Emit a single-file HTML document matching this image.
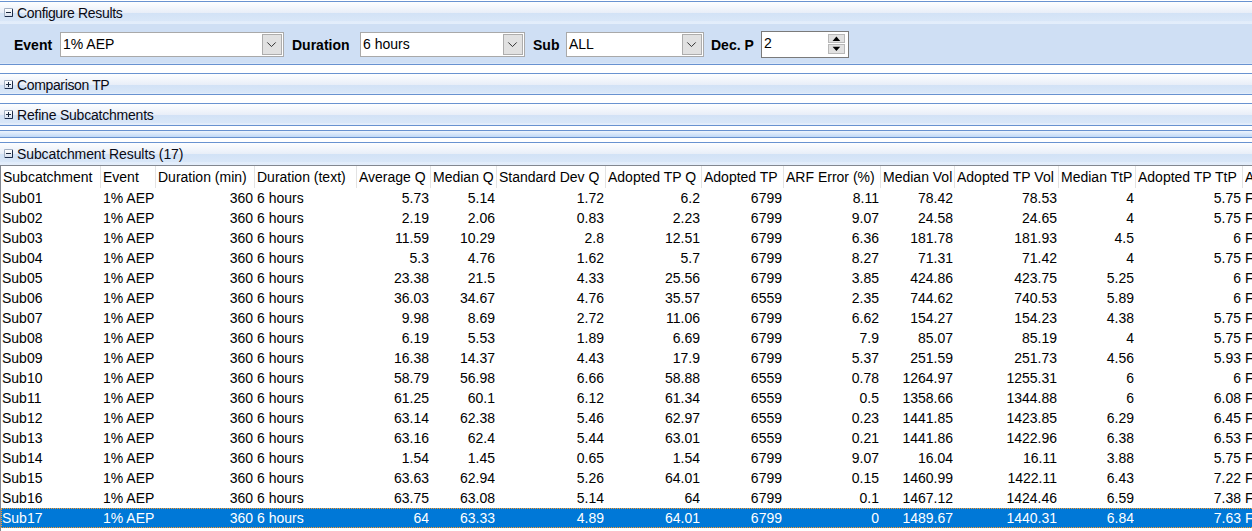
<!DOCTYPE html><html><head><meta charset="utf-8"><style>
*{margin:0;padding:0;box-sizing:border-box}
html,body{width:1252px;height:531px;overflow:hidden;background:#fff;font-family:"Liberation Sans",sans-serif;color:#000}
.a{position:absolute}
.ln{position:absolute;left:0;width:1252px;height:1px;background:#6892d0}
.band{position:absolute;left:0;width:1252px;background:linear-gradient(#fdfefe 0px,#e9eff8 11px,#d6e3f5 11px,#dae6f6 20px)}
.ttl{position:absolute;left:17px;font-size:14px;white-space:pre;color:#0a0a14;line-height:16px}
.ico{position:absolute;left:4px;width:9px;height:9px;border:1px solid #1d2d4a;border-top-color:#a0adc0;border-left-color:#a0adc0;border-radius:1.5px;background:linear-gradient(#ffffff,#eef2f9 50%,#d6dfee)}
.ico:before{content:"";position:absolute;left:1px;top:3px;width:5px;height:1px;background:#1b2a40}
.ico.p:after{content:"";position:absolute;left:3px;top:1px;width:1px;height:5px;background:#1b2a40}
.lbl{position:absolute;font-size:14px;font-weight:bold;white-space:pre;line-height:16px}
.cb{position:absolute;top:32px;height:25px;background:#fff;border:1px solid #a9a9a9}
.cb .t{position:absolute;left:2px;top:3px;font-size:14px;line-height:16px;white-space:pre}
.cb .btn{position:absolute;top:1px;right:1px;width:20px;height:21px;background:#e1e1e1;border:1px solid #adadad}
.cb .btn svg{position:absolute;left:0;top:0}
.hd{position:absolute;top:166px;height:22px;font-size:14px;line-height:16px;padding-top:3px;white-space:pre;overflow:hidden}
.sep{position:absolute;top:166px;width:1px;height:22px;background:#e3e3e3}
.c{position:absolute;height:20px;font-size:14px;line-height:16px;padding-top:2px;white-space:pre;overflow:hidden}
.r{text-align:right}
</style></head><body>
<div class="ln" style="top:1px"></div>
<div class="band" style="top:2px;height:22px;background:linear-gradient(#fdfeff 0px,#e8eef8 11px,#d2e2f6 11px,#d9e7f8 19px,#e1ecfa 19px,#e4eefb 22px)"></div>
<div class="ico" style="top:8px"></div>
<div class="ttl" style="top:5px;letter-spacing:-0.35px">Configure Results</div>
<div class="a" style="left:0;top:24px;width:1252px;height:40px;background:#cfdff4"></div>
<div class="a" style="left:0;top:63px;width:1252px;height:1px;background:#d9e6f8"></div>
<div class="ln" style="top:64px"></div>
<div class="lbl" style="left:14px;top:37px">Event</div>
<div class="cb" style="left:60px;width:224px"><div class="t">1% AEP</div><div class="btn"><svg width="19" height="19" viewBox="0 0 19 19"><path d="M4.3 7.4 L8.5 11.6 L12.7 7.4" fill="none" stroke="#333" stroke-width="1"/></svg></div></div>
<div class="lbl" style="left:292px;top:37px">Duration</div>
<div class="cb" style="left:360px;width:165px"><div class="t">6 hours</div><div class="btn"><svg width="19" height="19" viewBox="0 0 19 19"><path d="M4.3 7.4 L8.5 11.6 L12.7 7.4" fill="none" stroke="#333" stroke-width="1"/></svg></div></div>
<div class="lbl" style="left:533px;top:37px">Sub</div>
<div class="cb" style="left:566px;width:138px"><div class="t">ALL</div><div class="btn"><svg width="19" height="19" viewBox="0 0 19 19"><path d="M4.3 7.4 L8.5 11.6 L12.7 7.4" fill="none" stroke="#333" stroke-width="1"/></svg></div></div>
<div class="lbl" style="left:711px;top:37px">Dec. P</div>
<div class="a" style="left:761px;top:31px;width:88px;height:27px;background:#fff;border:1px solid #7a7a7a"><div class="a" style="left:2px;top:3px;font-size:14px;line-height:16px">2</div><div class="a" style="left:66px;top:2px;width:17px;height:9px;background:#e1e1e1;border:1px solid #b8b8b8"><svg class="a" style="left:0;top:0" width="15" height="7"><path d="M3.6 5.9 L7.4 1.6 L11.2 5.9 Z" fill="#000"/></svg></div><div class="a" style="left:66px;top:12px;width:17px;height:10px;background:#e1e1e1;border:1px solid #b8b8b8"><svg class="a" style="left:0;top:0" width="15" height="8"><path d="M3.6 1.8 L7.4 6.1 L11.2 1.8 Z" fill="#000"/></svg></div></div>
<div class="ln" style="top:73px"></div>
<div class="band" style="top:74px;height:20px;background:linear-gradient(#fdfeff 0px,#e8eef8 11px,#d2e2f6 11px,#d9e7f8 19px,#e1ecfa 19px,#e4eefb 20px)"></div>
<div class="ico p" style="top:80px"></div>
<div class="ttl" style="top:77px;letter-spacing:-0.36px">Comparison TP</div>
<div class="ln" style="top:94px"></div>
<div class="ln" style="top:103px"></div>
<div class="band" style="top:104px;height:21px;background:linear-gradient(#fdfeff 0px,#e8eef8 11px,#d2e2f6 11px,#d9e7f8 19px,#e1ecfa 19px,#e4eefb 21px)"></div>
<div class="ico p" style="top:110px"></div>
<div class="ttl" style="top:107px;letter-spacing:-0.21px">Refine Subcatchments</div>
<div class="ln" style="top:125px"></div>
<div class="ln" style="top:130px"></div>
<div class="a" style="left:0;top:131px;width:1252px;height:6px;background:linear-gradient(#edf4fd,#bfd8f6)"></div>
<div class="ln" style="top:137px"></div>
<div class="ln" style="top:142px"></div>
<div class="band" style="top:143px;height:22px;background:linear-gradient(#fdfeff 0px,#e8eef8 11px,#d2e2f6 11px,#d9e7f8 19px,#e1ecfa 19px,#e4eefb 22px)"></div>
<div class="ico" style="top:149px"></div>
<div class="ttl" style="top:146px;letter-spacing:-0.1px">Subcatchment Results (17)</div>
<div class="a" style="left:0;top:165px;width:1252px;height:1px;background:#828790"></div>
<div class="a" style="left:0;top:165px;width:1px;height:366px;background:#828790"></div>
<div class="hd" style="left:3px;width:97px">Subcatchment</div>
<div class="hd" style="left:103px;width:52px">Event</div>
<div class="hd" style="left:158px;width:96px">Duration (min)</div>
<div class="hd" style="left:257px;width:99px">Duration (text)</div>
<div class="hd" style="left:359px;width:71px">Average Q</div>
<div class="hd" style="left:433px;width:63px">Median Q</div>
<div class="hd" style="left:499px;width:106px">Standard Dev Q</div>
<div class="hd" style="left:608px;width:93px">Adopted TP Q</div>
<div class="hd" style="left:704px;width:79px">Adopted TP</div>
<div class="hd" style="left:786px;width:94px">ARF Error (%)</div>
<div class="hd" style="left:883px;width:71px">Median Vol</div>
<div class="hd" style="left:957px;width:101px">Adopted TP Vol</div>
<div class="hd" style="left:1061px;width:74px">Median TtP</div>
<div class="hd" style="left:1138px;width:104px">Adopted TP TtP</div>
<div class="hd" style="left:1245px;width:155px">A</div>
<div class="sep" style="left:100px"></div>
<div class="sep" style="left:155px"></div>
<div class="sep" style="left:254px"></div>
<div class="sep" style="left:356px"></div>
<div class="sep" style="left:430px"></div>
<div class="sep" style="left:496px"></div>
<div class="sep" style="left:605px"></div>
<div class="sep" style="left:701px"></div>
<div class="sep" style="left:783px"></div>
<div class="sep" style="left:880px"></div>
<div class="sep" style="left:954px"></div>
<div class="sep" style="left:1058px"></div>
<div class="sep" style="left:1135px"></div>
<div class="sep" style="left:1242px"></div>
<div class="a" style="left:1px;top:508px;width:1251px;height:20px;background:#0078d7"></div>
<div class="c" style="left:2px;width:97px;top:188px">Sub01</div>
<div class="c" style="left:103px;width:52px;top:188px">1% AEP</div>
<div class="c r" style="left:155px;width:98px;top:188px">360</div>
<div class="c" style="left:257px;width:99px;top:188px">6 hours</div>
<div class="c r" style="left:356px;width:73px;top:188px">5.73</div>
<div class="c r" style="left:430px;width:65px;top:188px">5.14</div>
<div class="c r" style="left:496px;width:108px;top:188px">1.72</div>
<div class="c r" style="left:605px;width:95px;top:188px">6.2</div>
<div class="c r" style="left:701px;width:81px;top:188px">6799</div>
<div class="c r" style="left:783px;width:96px;top:188px">8.11</div>
<div class="c r" style="left:880px;width:73px;top:188px">78.42</div>
<div class="c r" style="left:954px;width:103px;top:188px">78.53</div>
<div class="c r" style="left:1058px;width:76px;top:188px">4</div>
<div class="c r" style="left:1135px;width:106px;top:188px">5.75</div>
<div class="c" style="left:1245px;width:155px;top:188px">F</div>
<div class="c" style="left:2px;width:97px;top:208px">Sub02</div>
<div class="c" style="left:103px;width:52px;top:208px">1% AEP</div>
<div class="c r" style="left:155px;width:98px;top:208px">360</div>
<div class="c" style="left:257px;width:99px;top:208px">6 hours</div>
<div class="c r" style="left:356px;width:73px;top:208px">2.19</div>
<div class="c r" style="left:430px;width:65px;top:208px">2.06</div>
<div class="c r" style="left:496px;width:108px;top:208px">0.83</div>
<div class="c r" style="left:605px;width:95px;top:208px">2.23</div>
<div class="c r" style="left:701px;width:81px;top:208px">6799</div>
<div class="c r" style="left:783px;width:96px;top:208px">9.07</div>
<div class="c r" style="left:880px;width:73px;top:208px">24.58</div>
<div class="c r" style="left:954px;width:103px;top:208px">24.65</div>
<div class="c r" style="left:1058px;width:76px;top:208px">4</div>
<div class="c r" style="left:1135px;width:106px;top:208px">5.75</div>
<div class="c" style="left:1245px;width:155px;top:208px">F</div>
<div class="c" style="left:2px;width:97px;top:228px">Sub03</div>
<div class="c" style="left:103px;width:52px;top:228px">1% AEP</div>
<div class="c r" style="left:155px;width:98px;top:228px">360</div>
<div class="c" style="left:257px;width:99px;top:228px">6 hours</div>
<div class="c r" style="left:356px;width:73px;top:228px">11.59</div>
<div class="c r" style="left:430px;width:65px;top:228px">10.29</div>
<div class="c r" style="left:496px;width:108px;top:228px">2.8</div>
<div class="c r" style="left:605px;width:95px;top:228px">12.51</div>
<div class="c r" style="left:701px;width:81px;top:228px">6799</div>
<div class="c r" style="left:783px;width:96px;top:228px">6.36</div>
<div class="c r" style="left:880px;width:73px;top:228px">181.78</div>
<div class="c r" style="left:954px;width:103px;top:228px">181.93</div>
<div class="c r" style="left:1058px;width:76px;top:228px">4.5</div>
<div class="c r" style="left:1135px;width:106px;top:228px">6</div>
<div class="c" style="left:1245px;width:155px;top:228px">F</div>
<div class="c" style="left:2px;width:97px;top:248px">Sub04</div>
<div class="c" style="left:103px;width:52px;top:248px">1% AEP</div>
<div class="c r" style="left:155px;width:98px;top:248px">360</div>
<div class="c" style="left:257px;width:99px;top:248px">6 hours</div>
<div class="c r" style="left:356px;width:73px;top:248px">5.3</div>
<div class="c r" style="left:430px;width:65px;top:248px">4.76</div>
<div class="c r" style="left:496px;width:108px;top:248px">1.62</div>
<div class="c r" style="left:605px;width:95px;top:248px">5.7</div>
<div class="c r" style="left:701px;width:81px;top:248px">6799</div>
<div class="c r" style="left:783px;width:96px;top:248px">8.27</div>
<div class="c r" style="left:880px;width:73px;top:248px">71.31</div>
<div class="c r" style="left:954px;width:103px;top:248px">71.42</div>
<div class="c r" style="left:1058px;width:76px;top:248px">4</div>
<div class="c r" style="left:1135px;width:106px;top:248px">5.75</div>
<div class="c" style="left:1245px;width:155px;top:248px">F</div>
<div class="c" style="left:2px;width:97px;top:268px">Sub05</div>
<div class="c" style="left:103px;width:52px;top:268px">1% AEP</div>
<div class="c r" style="left:155px;width:98px;top:268px">360</div>
<div class="c" style="left:257px;width:99px;top:268px">6 hours</div>
<div class="c r" style="left:356px;width:73px;top:268px">23.38</div>
<div class="c r" style="left:430px;width:65px;top:268px">21.5</div>
<div class="c r" style="left:496px;width:108px;top:268px">4.33</div>
<div class="c r" style="left:605px;width:95px;top:268px">25.56</div>
<div class="c r" style="left:701px;width:81px;top:268px">6799</div>
<div class="c r" style="left:783px;width:96px;top:268px">3.85</div>
<div class="c r" style="left:880px;width:73px;top:268px">424.86</div>
<div class="c r" style="left:954px;width:103px;top:268px">423.75</div>
<div class="c r" style="left:1058px;width:76px;top:268px">5.25</div>
<div class="c r" style="left:1135px;width:106px;top:268px">6</div>
<div class="c" style="left:1245px;width:155px;top:268px">F</div>
<div class="c" style="left:2px;width:97px;top:288px">Sub06</div>
<div class="c" style="left:103px;width:52px;top:288px">1% AEP</div>
<div class="c r" style="left:155px;width:98px;top:288px">360</div>
<div class="c" style="left:257px;width:99px;top:288px">6 hours</div>
<div class="c r" style="left:356px;width:73px;top:288px">36.03</div>
<div class="c r" style="left:430px;width:65px;top:288px">34.67</div>
<div class="c r" style="left:496px;width:108px;top:288px">4.76</div>
<div class="c r" style="left:605px;width:95px;top:288px">35.57</div>
<div class="c r" style="left:701px;width:81px;top:288px">6559</div>
<div class="c r" style="left:783px;width:96px;top:288px">2.35</div>
<div class="c r" style="left:880px;width:73px;top:288px">744.62</div>
<div class="c r" style="left:954px;width:103px;top:288px">740.53</div>
<div class="c r" style="left:1058px;width:76px;top:288px">5.89</div>
<div class="c r" style="left:1135px;width:106px;top:288px">6</div>
<div class="c" style="left:1245px;width:155px;top:288px">F</div>
<div class="c" style="left:2px;width:97px;top:308px">Sub07</div>
<div class="c" style="left:103px;width:52px;top:308px">1% AEP</div>
<div class="c r" style="left:155px;width:98px;top:308px">360</div>
<div class="c" style="left:257px;width:99px;top:308px">6 hours</div>
<div class="c r" style="left:356px;width:73px;top:308px">9.98</div>
<div class="c r" style="left:430px;width:65px;top:308px">8.69</div>
<div class="c r" style="left:496px;width:108px;top:308px">2.72</div>
<div class="c r" style="left:605px;width:95px;top:308px">11.06</div>
<div class="c r" style="left:701px;width:81px;top:308px">6799</div>
<div class="c r" style="left:783px;width:96px;top:308px">6.62</div>
<div class="c r" style="left:880px;width:73px;top:308px">154.27</div>
<div class="c r" style="left:954px;width:103px;top:308px">154.23</div>
<div class="c r" style="left:1058px;width:76px;top:308px">4.38</div>
<div class="c r" style="left:1135px;width:106px;top:308px">5.75</div>
<div class="c" style="left:1245px;width:155px;top:308px">F</div>
<div class="c" style="left:2px;width:97px;top:328px">Sub08</div>
<div class="c" style="left:103px;width:52px;top:328px">1% AEP</div>
<div class="c r" style="left:155px;width:98px;top:328px">360</div>
<div class="c" style="left:257px;width:99px;top:328px">6 hours</div>
<div class="c r" style="left:356px;width:73px;top:328px">6.19</div>
<div class="c r" style="left:430px;width:65px;top:328px">5.53</div>
<div class="c r" style="left:496px;width:108px;top:328px">1.89</div>
<div class="c r" style="left:605px;width:95px;top:328px">6.69</div>
<div class="c r" style="left:701px;width:81px;top:328px">6799</div>
<div class="c r" style="left:783px;width:96px;top:328px">7.9</div>
<div class="c r" style="left:880px;width:73px;top:328px">85.07</div>
<div class="c r" style="left:954px;width:103px;top:328px">85.19</div>
<div class="c r" style="left:1058px;width:76px;top:328px">4</div>
<div class="c r" style="left:1135px;width:106px;top:328px">5.75</div>
<div class="c" style="left:1245px;width:155px;top:328px">F</div>
<div class="c" style="left:2px;width:97px;top:348px">Sub09</div>
<div class="c" style="left:103px;width:52px;top:348px">1% AEP</div>
<div class="c r" style="left:155px;width:98px;top:348px">360</div>
<div class="c" style="left:257px;width:99px;top:348px">6 hours</div>
<div class="c r" style="left:356px;width:73px;top:348px">16.38</div>
<div class="c r" style="left:430px;width:65px;top:348px">14.37</div>
<div class="c r" style="left:496px;width:108px;top:348px">4.43</div>
<div class="c r" style="left:605px;width:95px;top:348px">17.9</div>
<div class="c r" style="left:701px;width:81px;top:348px">6799</div>
<div class="c r" style="left:783px;width:96px;top:348px">5.37</div>
<div class="c r" style="left:880px;width:73px;top:348px">251.59</div>
<div class="c r" style="left:954px;width:103px;top:348px">251.73</div>
<div class="c r" style="left:1058px;width:76px;top:348px">4.56</div>
<div class="c r" style="left:1135px;width:106px;top:348px">5.93</div>
<div class="c" style="left:1245px;width:155px;top:348px">F</div>
<div class="c" style="left:2px;width:97px;top:368px">Sub10</div>
<div class="c" style="left:103px;width:52px;top:368px">1% AEP</div>
<div class="c r" style="left:155px;width:98px;top:368px">360</div>
<div class="c" style="left:257px;width:99px;top:368px">6 hours</div>
<div class="c r" style="left:356px;width:73px;top:368px">58.79</div>
<div class="c r" style="left:430px;width:65px;top:368px">56.98</div>
<div class="c r" style="left:496px;width:108px;top:368px">6.66</div>
<div class="c r" style="left:605px;width:95px;top:368px">58.88</div>
<div class="c r" style="left:701px;width:81px;top:368px">6559</div>
<div class="c r" style="left:783px;width:96px;top:368px">0.78</div>
<div class="c r" style="left:880px;width:73px;top:368px">1264.97</div>
<div class="c r" style="left:954px;width:103px;top:368px">1255.31</div>
<div class="c r" style="left:1058px;width:76px;top:368px">6</div>
<div class="c r" style="left:1135px;width:106px;top:368px">6</div>
<div class="c" style="left:1245px;width:155px;top:368px">F</div>
<div class="c" style="left:2px;width:97px;top:388px">Sub11</div>
<div class="c" style="left:103px;width:52px;top:388px">1% AEP</div>
<div class="c r" style="left:155px;width:98px;top:388px">360</div>
<div class="c" style="left:257px;width:99px;top:388px">6 hours</div>
<div class="c r" style="left:356px;width:73px;top:388px">61.25</div>
<div class="c r" style="left:430px;width:65px;top:388px">60.1</div>
<div class="c r" style="left:496px;width:108px;top:388px">6.12</div>
<div class="c r" style="left:605px;width:95px;top:388px">61.34</div>
<div class="c r" style="left:701px;width:81px;top:388px">6559</div>
<div class="c r" style="left:783px;width:96px;top:388px">0.5</div>
<div class="c r" style="left:880px;width:73px;top:388px">1358.66</div>
<div class="c r" style="left:954px;width:103px;top:388px">1344.88</div>
<div class="c r" style="left:1058px;width:76px;top:388px">6</div>
<div class="c r" style="left:1135px;width:106px;top:388px">6.08</div>
<div class="c" style="left:1245px;width:155px;top:388px">F</div>
<div class="c" style="left:2px;width:97px;top:408px">Sub12</div>
<div class="c" style="left:103px;width:52px;top:408px">1% AEP</div>
<div class="c r" style="left:155px;width:98px;top:408px">360</div>
<div class="c" style="left:257px;width:99px;top:408px">6 hours</div>
<div class="c r" style="left:356px;width:73px;top:408px">63.14</div>
<div class="c r" style="left:430px;width:65px;top:408px">62.38</div>
<div class="c r" style="left:496px;width:108px;top:408px">5.46</div>
<div class="c r" style="left:605px;width:95px;top:408px">62.97</div>
<div class="c r" style="left:701px;width:81px;top:408px">6559</div>
<div class="c r" style="left:783px;width:96px;top:408px">0.23</div>
<div class="c r" style="left:880px;width:73px;top:408px">1441.85</div>
<div class="c r" style="left:954px;width:103px;top:408px">1423.85</div>
<div class="c r" style="left:1058px;width:76px;top:408px">6.29</div>
<div class="c r" style="left:1135px;width:106px;top:408px">6.45</div>
<div class="c" style="left:1245px;width:155px;top:408px">F</div>
<div class="c" style="left:2px;width:97px;top:428px">Sub13</div>
<div class="c" style="left:103px;width:52px;top:428px">1% AEP</div>
<div class="c r" style="left:155px;width:98px;top:428px">360</div>
<div class="c" style="left:257px;width:99px;top:428px">6 hours</div>
<div class="c r" style="left:356px;width:73px;top:428px">63.16</div>
<div class="c r" style="left:430px;width:65px;top:428px">62.4</div>
<div class="c r" style="left:496px;width:108px;top:428px">5.44</div>
<div class="c r" style="left:605px;width:95px;top:428px">63.01</div>
<div class="c r" style="left:701px;width:81px;top:428px">6559</div>
<div class="c r" style="left:783px;width:96px;top:428px">0.21</div>
<div class="c r" style="left:880px;width:73px;top:428px">1441.86</div>
<div class="c r" style="left:954px;width:103px;top:428px">1422.96</div>
<div class="c r" style="left:1058px;width:76px;top:428px">6.38</div>
<div class="c r" style="left:1135px;width:106px;top:428px">6.53</div>
<div class="c" style="left:1245px;width:155px;top:428px">F</div>
<div class="c" style="left:2px;width:97px;top:448px">Sub14</div>
<div class="c" style="left:103px;width:52px;top:448px">1% AEP</div>
<div class="c r" style="left:155px;width:98px;top:448px">360</div>
<div class="c" style="left:257px;width:99px;top:448px">6 hours</div>
<div class="c r" style="left:356px;width:73px;top:448px">1.54</div>
<div class="c r" style="left:430px;width:65px;top:448px">1.45</div>
<div class="c r" style="left:496px;width:108px;top:448px">0.65</div>
<div class="c r" style="left:605px;width:95px;top:448px">1.54</div>
<div class="c r" style="left:701px;width:81px;top:448px">6799</div>
<div class="c r" style="left:783px;width:96px;top:448px">9.07</div>
<div class="c r" style="left:880px;width:73px;top:448px">16.04</div>
<div class="c r" style="left:954px;width:103px;top:448px">16.11</div>
<div class="c r" style="left:1058px;width:76px;top:448px">3.88</div>
<div class="c r" style="left:1135px;width:106px;top:448px">5.75</div>
<div class="c" style="left:1245px;width:155px;top:448px">F</div>
<div class="c" style="left:2px;width:97px;top:468px">Sub15</div>
<div class="c" style="left:103px;width:52px;top:468px">1% AEP</div>
<div class="c r" style="left:155px;width:98px;top:468px">360</div>
<div class="c" style="left:257px;width:99px;top:468px">6 hours</div>
<div class="c r" style="left:356px;width:73px;top:468px">63.63</div>
<div class="c r" style="left:430px;width:65px;top:468px">62.94</div>
<div class="c r" style="left:496px;width:108px;top:468px">5.26</div>
<div class="c r" style="left:605px;width:95px;top:468px">64.01</div>
<div class="c r" style="left:701px;width:81px;top:468px">6799</div>
<div class="c r" style="left:783px;width:96px;top:468px">0.15</div>
<div class="c r" style="left:880px;width:73px;top:468px">1460.99</div>
<div class="c r" style="left:954px;width:103px;top:468px">1422.11</div>
<div class="c r" style="left:1058px;width:76px;top:468px">6.43</div>
<div class="c r" style="left:1135px;width:106px;top:468px">7.22</div>
<div class="c" style="left:1245px;width:155px;top:468px">F</div>
<div class="c" style="left:2px;width:97px;top:488px">Sub16</div>
<div class="c" style="left:103px;width:52px;top:488px">1% AEP</div>
<div class="c r" style="left:155px;width:98px;top:488px">360</div>
<div class="c" style="left:257px;width:99px;top:488px">6 hours</div>
<div class="c r" style="left:356px;width:73px;top:488px">63.75</div>
<div class="c r" style="left:430px;width:65px;top:488px">63.08</div>
<div class="c r" style="left:496px;width:108px;top:488px">5.14</div>
<div class="c r" style="left:605px;width:95px;top:488px">64</div>
<div class="c r" style="left:701px;width:81px;top:488px">6799</div>
<div class="c r" style="left:783px;width:96px;top:488px">0.1</div>
<div class="c r" style="left:880px;width:73px;top:488px">1467.12</div>
<div class="c r" style="left:954px;width:103px;top:488px">1424.46</div>
<div class="c r" style="left:1058px;width:76px;top:488px">6.59</div>
<div class="c r" style="left:1135px;width:106px;top:488px">7.38</div>
<div class="c" style="left:1245px;width:155px;top:488px">F</div>
<div class="c" style="left:2px;width:97px;top:508px;color:#fff">Sub17</div>
<div class="c" style="left:103px;width:52px;top:508px;color:#fff">1% AEP</div>
<div class="c r" style="left:155px;width:98px;top:508px;color:#fff">360</div>
<div class="c" style="left:257px;width:99px;top:508px;color:#fff">6 hours</div>
<div class="c r" style="left:356px;width:73px;top:508px;color:#fff">64</div>
<div class="c r" style="left:430px;width:65px;top:508px;color:#fff">63.33</div>
<div class="c r" style="left:496px;width:108px;top:508px;color:#fff">4.89</div>
<div class="c r" style="left:605px;width:95px;top:508px;color:#fff">64.01</div>
<div class="c r" style="left:701px;width:81px;top:508px;color:#fff">6799</div>
<div class="c r" style="left:783px;width:96px;top:508px;color:#fff">0</div>
<div class="c r" style="left:880px;width:73px;top:508px;color:#fff">1489.67</div>
<div class="c r" style="left:954px;width:103px;top:508px;color:#fff">1440.31</div>
<div class="c r" style="left:1058px;width:76px;top:508px;color:#fff">6.84</div>
<div class="c r" style="left:1135px;width:106px;top:508px;color:#fff">7.63</div>
<div class="c" style="left:1245px;width:155px;top:508px;color:#fff">F</div>
<div class="a" style="left:1px;top:508px;width:1251px;height:20px;border:1px dotted #ff9a28;border-right:none"></div>
</body></html>
